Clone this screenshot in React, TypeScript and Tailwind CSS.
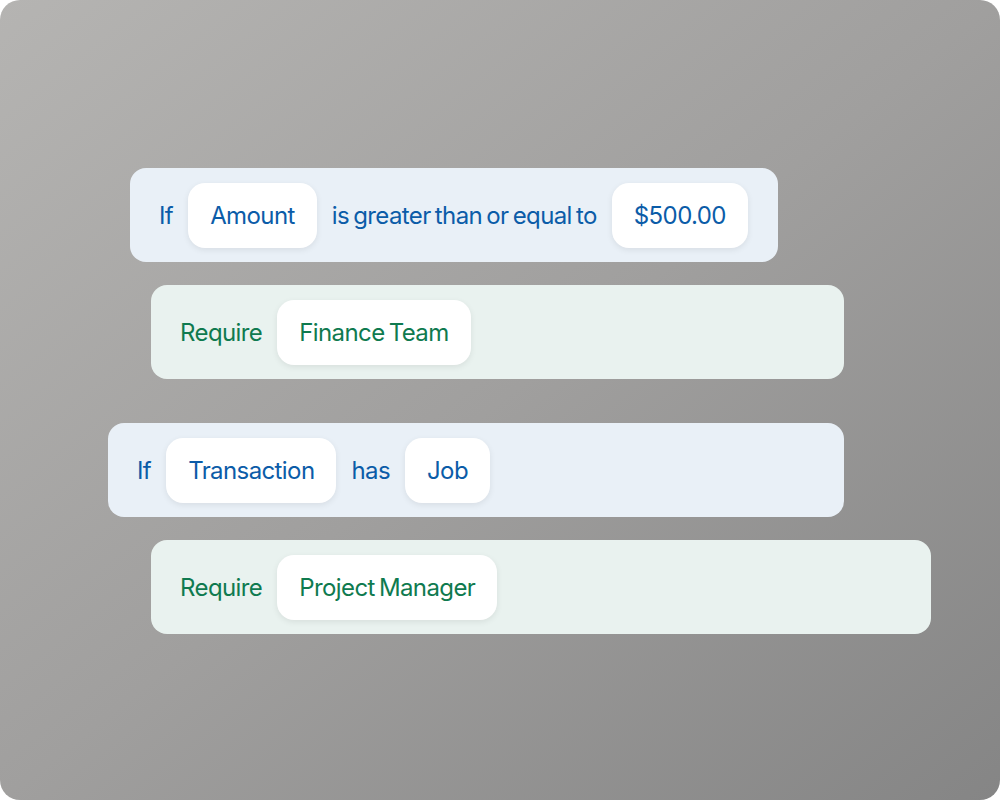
import React from 'react';

const font = { fontFamily: 'Inter, "Liberation Sans", sans-serif' };

function Chip({ children }: { children: React.ReactNode }) {
  return (
    <span className="flex h-[65px] items-center whitespace-nowrap rounded-[17px] bg-white px-[22px] pt-[2px] shadow-[0_2px_6px_rgba(0,0,0,0.08)]">
      {children}
    </span>
  );
}

function Word({ children }: { children: React.ReactNode }) {
  return <span className="whitespace-nowrap pt-[2px]">{children}</span>;
}

function RuleCard({
  tone,
  className,
  children,
}: {
  tone: 'blue' | 'green';
  className: string;
  children: React.ReactNode;
}) {
  const toneClass =
    tone === 'blue'
      ? 'bg-[#e9f0f7] text-[#0b5ca8]'
      : 'bg-[#e9f2ef] text-[#0f7a4f]';
  return (
    <div
      className={`flex h-[94px] items-center gap-[15px] rounded-[16px] pl-[29px] text-[24px] tracking-[-0.025em] [word-spacing:-2px] ${toneClass} ${className}`}
    >
      {children}
    </div>
  );
}

export default function App() {
  return (
    <div className="h-[800px] w-[1000px] bg-white" style={font}>
      <div className="flex h-full w-full flex-col rounded-[20px] bg-gradient-to-br from-[#b5b4b2] via-[#a09f9e] to-[#858585] pt-[168px]">
        <RuleCard tone="blue" className="ml-[130px] w-[648px]">
          <Word>If</Word>
          <Chip>Amount</Chip>
          <Word>is greater than or equal to</Word>
          <Chip>$500.00</Chip>
        </RuleCard>

        <RuleCard tone="green" className="ml-[151px] mt-[23px] w-[693px]">
          <Word>Require</Word>
          <Chip>Finance Team</Chip>
        </RuleCard>

        <RuleCard tone="blue" className="ml-[108px] mt-[44px] w-[736px]">
          <Word>If</Word>
          <Chip>Transaction</Chip>
          <Word>has</Word>
          <Chip>Job</Chip>
        </RuleCard>

        <RuleCard tone="green" className="ml-[151px] mt-[23px] w-[780px]">
          <Word>Require</Word>
          <Chip>Project Manager</Chip>
        </RuleCard>
      </div>
    </div>
  );
}
